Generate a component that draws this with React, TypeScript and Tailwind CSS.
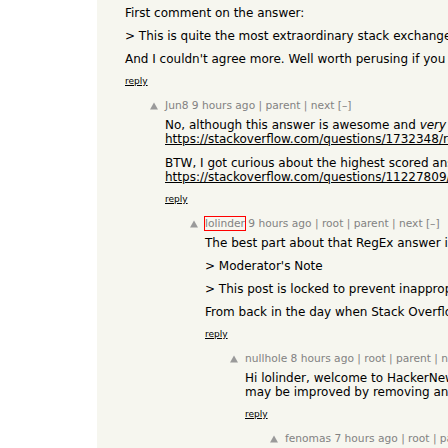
import React from "react";

const font = { fontFamily: '"DejaVu Sans", Verdana, sans-serif' };

function Arrow() {
  return (
    <svg width="8" height="8" viewBox="0 0 8 8" className="mt-[3px] block">
      <polygon points="4,0.5 8,7.5 0,7.5" fill="#9a9a9a" />
    </svg>
  );
}

function Head({ children }: { children: React.ReactNode }) {
  return (
    <div className="h-[14px] leading-[14px] text-[10.67px] text-[#828282] whitespace-nowrap">
      {children}
    </div>
  );
}

function Para({ lines }: { lines: React.ReactNode[] }) {
  return (
    <div>
      {lines.map((l, i) => (
        <div key={i} className="h-[14px] leading-[14px] whitespace-nowrap">
          {l}
        </div>
      ))}
    </div>
  );
}

function Reply() {
  return (
    <div className="mt-[8px] h-[14px] leading-[14px] text-[9px] text-black">
      <span className="underline">reply</span>
    </div>
  );
}

function Link({ children }: { children: React.ReactNode }) {
  return <span className="underline text-black">{children}</span>;
}

export default function App() {
  return (
    <div className="flex w-[448px] h-[448px] overflow-hidden bg-white" style={font}>
      <div className="w-[97px] shrink-0 bg-white" />
      <div className="flex-1 min-w-0 bg-[#f6f6ef] overflow-hidden text-[12px] text-black">
        {/* depth 0 */}
        <div className="flex pl-[13px] pt-[6px]">
          <div className="w-[15px] shrink-0" />
          <div className="flex flex-col">
            <div className="flex flex-col gap-[9px]">
              <Para lines={["First comment on the answer:"]} />
              <Para lines={["> This is quite the most extraordinary stack exchange answer I have ever read."]} />
              <Para lines={["And I couldn't agree more. Well worth perusing if you haven't already seen it."]} />
            </div>
            <Reply />
          </div>
        </div>

        {/* depth 1 */}
        <div className="flex pl-[53px] mt-[11px]">
          <div className="w-[15px] shrink-0">
            <Arrow />
          </div>
          <div className="flex flex-col">
            <Head>Jun8 9 hours ago | parent | next [–]</Head>
            <div className="mt-[5px] flex flex-col gap-[10px]">
              <Para
                lines={[
                  <>
                    No, although this answer is awesome and <i>very</i> entertaining, it is not the top one:
                  </>,
                  <Link>https://stackoverflow.com/questions/1732348/regex-match-open-tags-except-xhtml-self-contained-tags</Link>,
                ]}
              />
              <Para
                lines={[
                  "BTW, I got curious about the highest scored answer on the whole site:",
                  <Link>https://stackoverflow.com/questions/11227809/why-is-processing-a-sorted-array-faster</Link>,
                ]}
              />
            </div>
            <Reply />
          </div>
        </div>

        {/* depth 2 */}
        <div className="flex pl-[93px] mt-[11px]">
          <div className="w-[15px] shrink-0">
            <Arrow />
          </div>
          <div className="flex flex-col">
            <Head>
              <span className="outline outline-1 outline-[#ff0000]">lolinder</span> 9 hours ago | root | parent | next [–]
            </Head>
            <div className="mt-[5px] flex flex-col gap-[9px]">
              <Para lines={["The best part about that RegEx answer is the moderator's note at the bottom:"]} />
              <Para lines={["> Moderator's Note"]} />
              <Para lines={["> This post is locked to prevent inappropriate edits to its content."]} />
              <Para lines={["From back in the day when Stack Overflow moderators had a sense of humor."]} />
            </div>
            <Reply />
          </div>
        </div>

        {/* depth 3 */}
        <div className="flex pl-[133px] mt-[11px]">
          <div className="w-[15px] shrink-0">
            <Arrow />
          </div>
          <div className="flex flex-col">
            <Head>nullhole 8 hours ago | root | parent | next [–]</Head>
            <div className="mt-[5px] flex flex-col gap-[9px]">
              <Para
                lines={[
                  "Hi lolinder, welcome to HackerNews! Your comment",
                  "may be improved by removing an unnecessary word.",
                ]}
              />
            </div>
            <Reply />
          </div>
        </div>

        {/* depth 4 */}
        <div className="flex pl-[173px] mt-[11px]">
          <div className="w-[15px] shrink-0">
            <Arrow />
          </div>
          <div className="flex flex-col">
            <Head>fenomas 7 hours ago | root | parent | next [–]</Head>
          </div>
        </div>
      </div>
    </div>
  );
}
